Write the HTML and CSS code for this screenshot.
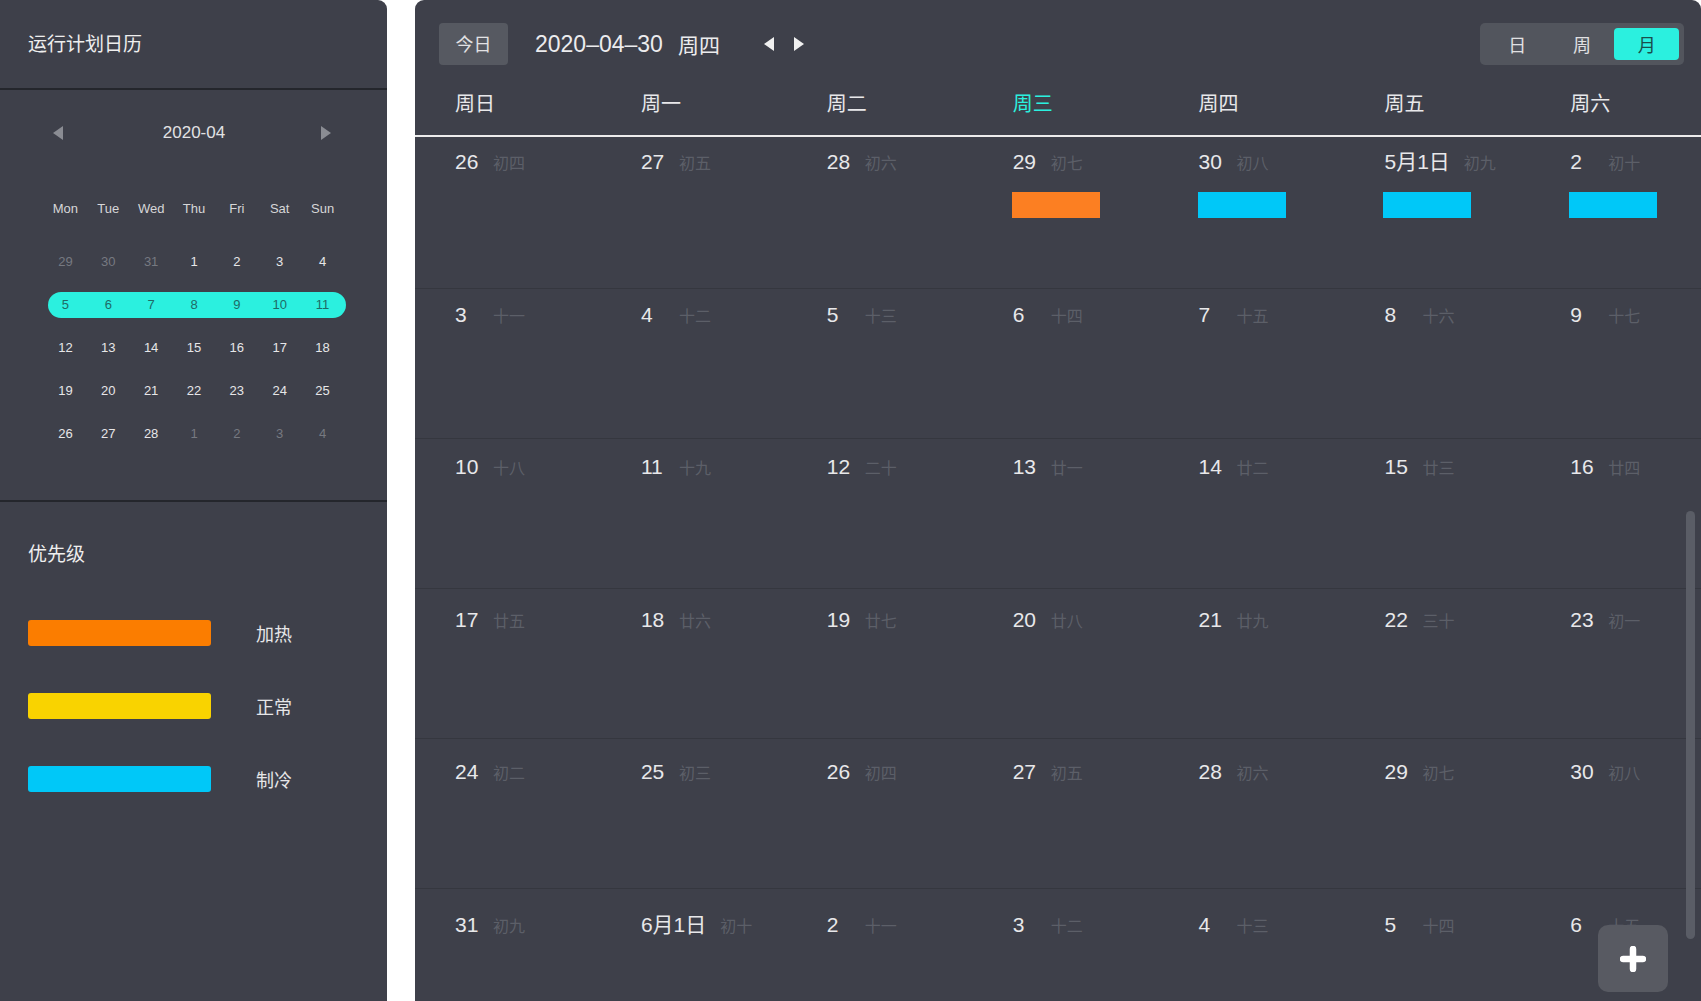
FILE: index.html
```html
<!DOCTYPE html>
<html lang="zh-CN">
<head>
<meta charset="utf-8">
<title>运行计划日历</title>
<link rel="stylesheet" href="styles.css">
</head>
<body>
<aside class="sidebar">
  <div class="side-title">运行计划日历</div>
  <div class="divider"></div>
  <section class="mini">
    <div class="mini-head">
      <svg class="mini-arrow" width="10" height="14" viewBox="0 0 10 14"><path d="M10 0 L0 7 L10 14 Z" fill="#8a8c93"/></svg>
      <span class="mini-month">2020-04</span>
      <svg class="mini-arrow" width="10" height="14" viewBox="0 0 10 14"><path d="M0 0 L10 7 L0 14 Z" fill="#8a8c93"/></svg>
    </div>
    <div class="mini-week">
      <span>Mon</span><span>Tue</span><span>Wed</span><span>Thu</span><span>Fri</span><span>Sat</span><span>Sun</span>
    </div>
    <div class="mini-row"><div class="mini-in">
      <span class="dim">29</span><span class="dim">30</span><span class="dim">31</span><span>1</span><span>2</span><span>3</span><span>4</span>
    </div></div>
    <div class="mini-row"><div class="mini-in sel">
      <span>5</span><span>6</span><span>7</span><span>8</span><span>9</span><span>10</span><span>11</span>
    </div></div>
    <div class="mini-row"><div class="mini-in">
      <span>12</span><span>13</span><span>14</span><span>15</span><span>16</span><span>17</span><span>18</span>
    </div></div>
    <div class="mini-row"><div class="mini-in">
      <span>19</span><span>20</span><span>21</span><span>22</span><span>23</span><span>24</span><span>25</span>
    </div></div>
    <div class="mini-row"><div class="mini-in">
      <span>26</span><span>27</span><span>28</span><span class="dim">1</span><span class="dim">2</span><span class="dim">3</span><span class="dim">4</span>
    </div></div>
  </section>
  <div class="divider"></div>
  <section class="prio">
    <div class="prio-title">优先级</div>
    <div class="legend">
      <div class="lg-row"><span class="lg-bar heat"></span><span class="lg-label">加热</span></div>
      <div class="lg-row"><span class="lg-bar normal"></span><span class="lg-label">正常</span></div>
      <div class="lg-row"><span class="lg-bar cool"></span><span class="lg-label">制冷</span></div>
    </div>
  </section>
</aside>

<main class="main">
  <div class="topbar">
    <div class="today">今日</div>
    <span class="cur-date">2020–04–30</span>
    <span class="cur-week">周四</span>
    <div class="nav">
      <svg width="10" height="14" viewBox="0 0 10 14"><path d="M10 0 L0 7 L10 14 Z" fill="#f0f0f0"/></svg>
      <svg width="10" height="14" viewBox="0 0 10 14"><path d="M0 0 L10 7 L0 14 Z" fill="#f0f0f0"/></svg>
    </div>
    <div class="views">
      <span class="view">日</span>
      <span class="view">周</span>
      <span class="view active">月</span>
    </div>
  </div>

  <div class="weekhead">
    <span>周日</span><span>周一</span><span>周二</span><span class="today-col">周三</span><span>周四</span><span>周五</span><span>周六</span>
  </div>

  <div class="grid">
    <div class="cell"><div class="dn"><span class="num">26</span><span class="lunar">初四</span></div></div>
    <div class="cell"><div class="dn"><span class="num">27</span><span class="lunar">初五</span></div></div>
    <div class="cell"><div class="dn"><span class="num">28</span><span class="lunar">初六</span></div></div>
    <div class="cell"><div class="dn"><span class="num">29</span><span class="lunar">初七</span></div><div class="ev heat-ev"></div></div>
    <div class="cell"><div class="dn"><span class="num">30</span><span class="lunar">初八</span></div><div class="ev cool-ev"></div></div>
    <div class="cell"><div class="dn"><span class="num">5月1日</span><span class="lunar">初九</span></div><div class="ev cool-ev"></div></div>
    <div class="cell"><div class="dn"><span class="num">2</span><span class="lunar">初十</span></div><div class="ev cool-ev"></div></div>

    <div class="cell"><div class="dn"><span class="num">3</span><span class="lunar">十一</span></div></div>
    <div class="cell"><div class="dn"><span class="num">4</span><span class="lunar">十二</span></div></div>
    <div class="cell"><div class="dn"><span class="num">5</span><span class="lunar">十三</span></div></div>
    <div class="cell"><div class="dn"><span class="num">6</span><span class="lunar">十四</span></div></div>
    <div class="cell"><div class="dn"><span class="num">7</span><span class="lunar">十五</span></div></div>
    <div class="cell"><div class="dn"><span class="num">8</span><span class="lunar">十六</span></div></div>
    <div class="cell"><div class="dn"><span class="num">9</span><span class="lunar">十七</span></div></div>

    <div class="cell"><div class="dn"><span class="num">10</span><span class="lunar">十八</span></div></div>
    <div class="cell"><div class="dn"><span class="num">11</span><span class="lunar">十九</span></div></div>
    <div class="cell"><div class="dn"><span class="num">12</span><span class="lunar">二十</span></div></div>
    <div class="cell"><div class="dn"><span class="num">13</span><span class="lunar">廿一</span></div></div>
    <div class="cell"><div class="dn"><span class="num">14</span><span class="lunar">廿二</span></div></div>
    <div class="cell"><div class="dn"><span class="num">15</span><span class="lunar">廿三</span></div></div>
    <div class="cell"><div class="dn"><span class="num">16</span><span class="lunar">廿四</span></div></div>

    <div class="cell"><div class="dn"><span class="num">17</span><span class="lunar">廿五</span></div></div>
    <div class="cell"><div class="dn"><span class="num">18</span><span class="lunar">廿六</span></div></div>
    <div class="cell"><div class="dn"><span class="num">19</span><span class="lunar">廿七</span></div></div>
    <div class="cell"><div class="dn"><span class="num">20</span><span class="lunar">廿八</span></div></div>
    <div class="cell"><div class="dn"><span class="num">21</span><span class="lunar">廿九</span></div></div>
    <div class="cell"><div class="dn"><span class="num">22</span><span class="lunar">三十</span></div></div>
    <div class="cell"><div class="dn"><span class="num">23</span><span class="lunar">初一</span></div></div>

    <div class="cell"><div class="dn"><span class="num">24</span><span class="lunar">初二</span></div></div>
    <div class="cell"><div class="dn"><span class="num">25</span><span class="lunar">初三</span></div></div>
    <div class="cell"><div class="dn"><span class="num">26</span><span class="lunar">初四</span></div></div>
    <div class="cell"><div class="dn"><span class="num">27</span><span class="lunar">初五</span></div></div>
    <div class="cell"><div class="dn"><span class="num">28</span><span class="lunar">初六</span></div></div>
    <div class="cell"><div class="dn"><span class="num">29</span><span class="lunar">初七</span></div></div>
    <div class="cell"><div class="dn"><span class="num">30</span><span class="lunar">初八</span></div></div>

    <div class="cell"><div class="dn"><span class="num">31</span><span class="lunar">初九</span></div></div>
    <div class="cell"><div class="dn"><span class="num">6月1日</span><span class="lunar">初十</span></div></div>
    <div class="cell"><div class="dn"><span class="num">2</span><span class="lunar">十一</span></div></div>
    <div class="cell"><div class="dn"><span class="num">3</span><span class="lunar">十二</span></div></div>
    <div class="cell"><div class="dn"><span class="num">4</span><span class="lunar">十三</span></div></div>
    <div class="cell"><div class="dn"><span class="num">5</span><span class="lunar">十四</span></div></div>
    <div class="cell"><div class="dn"><span class="num">6</span><span class="lunar">十五</span></div></div>
  </div>

  <div class="scroll-thumb"></div>
  <button class="fab" type="button" aria-label="新增">
    <svg width="26" height="26" viewBox="0 0 26 26"><path d="M13 3 V23 M3 13 H23" stroke="#ffffff" stroke-width="6.5" stroke-linecap="round" fill="none"/></svg>
  </button>
</main>
</body>
</html>
```
FILE: styles.css
```css
* { box-sizing: border-box; margin: 0; padding: 0; }

html, body { height: 100%; }

body {
  background: #ffffff;
  font-family: "Liberation Sans", "Noto Sans CJK SC", sans-serif;
  color: #e6e6e8;
  display: flex;
  gap: 28px;
  height: 1001px;
  overflow: hidden;
}

/* ---------- sidebar ---------- */
.sidebar {
  width: 387px;
  flex: none;
  background: #3e404a;
  border-top-right-radius: 9px;
  display: flex;
  flex-direction: column;
}

.side-title {
  height: 88px;
  padding: 0 0 3px 28px;
  display: flex;
  align-items: center;
  font-size: 19px;
  color: #eeeeee;
}

.divider {
  height: 2px;
  background: #24262c;
  flex: none;
}

.mini { padding: 30px 0 45px; }

.mini-head {
  height: 26px;
  display: flex;
  align-items: center;
  justify-content: space-between;
  padding: 0 56px 0 53px;
}

.mini-month {
  font-size: 17px;
  color: #e2e2e4;
  margin-left: 4px;
}

.mini-week {
  margin: 49px 0 19px 44px;
  width: 300px;
  height: 26px;
  display: grid;
  grid-template-columns: repeat(7, 1fr);
  align-items: center;
  justify-items: center;
  font-size: 13px;
  color: #d6d6d8;
}

.mini-row {
  height: 43px;
  padding: 8.5px 0;
}

.mini-in {
  margin-left: 44px;
  width: 300px;
  height: 26px;
  display: grid;
  grid-template-columns: repeat(7, 1fr);
  align-items: center;
  justify-items: center;
  font-size: 13px;
  color: #e6e6e8;
}

.mini-in .dim { color: #767981; }

.mini-in.sel {
  position: relative;
  isolation: isolate;
  color: #1f6b66;
}

.mini-in.sel::before {
  content: "";
  position: absolute;
  left: 4px;
  right: -2px;
  top: 0;
  bottom: 0;
  border-radius: 13px;
  background: #2bf0df;
  z-index: -1;
}

.prio { padding: 40px 0 0 28px; }

.prio-title {
  font-size: 19px;
  line-height: 26px;
  color: #eeeeee;
}

.legend {
  margin-top: 52px;
  display: flex;
  flex-direction: column;
  gap: 47px;
}

.lg-row {
  display: flex;
  align-items: center;
  gap: 45px;
}

.lg-bar {
  width: 183px;
  height: 26px;
  border-radius: 3px;
}

.lg-bar.heat { background: #fb7d00; }
.lg-bar.normal { background: #f9d300; }
.lg-bar.cool { background: #00c8f8; }

.lg-label {
  font-size: 18px;
  color: #e6e6e8;
}

/* ---------- main ---------- */
.main {
  flex: 1;
  position: relative;
  background: #3e404a;
  border-radius: 9px 9px 0 0;
  overflow: hidden;
  display: flex;
  flex-direction: column;
}

.topbar {
  height: 65px;
  padding: 23px 17px 0 24px;
  display: flex;
  align-items: center;
  flex: none;
}

.today {
  width: 69px;
  height: 42px;
  background: #565961;
  border-radius: 4px;
  display: flex;
  align-items: center;
  justify-content: center;
  font-size: 18px;
  color: #e2e2e4;
  padding-bottom: 2px;
}

.cur-date {
  margin-left: 27px;
  font-size: 23px;
  color: #ececee;
}

.cur-week {
  margin-left: 15px;
  font-size: 21px;
  color: #ececee;
}

.nav {
  margin-left: 44px;
  display: flex;
  gap: 20px;
}

.views {
  margin-left: auto;
  width: 204px;
  height: 42px;
  padding: 5px;
  background: #52555d;
  border-radius: 5px;
  display: flex;
}

.view {
  flex: 1;
  display: flex;
  align-items: center;
  justify-content: center;
  font-size: 18px;
  color: #e0e0e2;
  border-radius: 4px;
}

.view.active {
  background: #2bf0df;
  color: #1a4f4c;
}

.weekhead {
  flex: none;
  display: grid;
  grid-template-columns: repeat(6, 185.9px) 1fr;
  padding: 27px 0 19px;
  border-bottom: 2px solid #ececec;
  font-size: 20px;
  line-height: 24px;
  color: #e8e8ea;
}

.weekhead span { padding-left: 40px; }

.weekhead .today-col { color: #2bf0df; }

.grid {
  margin-top: 2px;
  display: grid;
  grid-template-columns: repeat(6, 185.9px) 1fr;
  grid-auto-rows: 152.5px;
  background: repeating-linear-gradient(to bottom, transparent 0 149px, #35373f 149px 150px);
}

.cell {
  padding: 11px 0 0 40px;
}

.dn {
  display: flex;
  align-items: baseline;
}

.num {
  min-width: 24px;
  margin-right: 14px;
  font-size: 21px;
  line-height: 24px;
  color: #e8e8ea;
  white-space: nowrap;
}

.lunar {
  font-size: 16px;
  color: #5c5f68;
  white-space: nowrap;
}

.ev {
  width: 88px;
  height: 26px;
  margin: 18px 0 0 -1px;
}

.heat-ev { background: #fc7f22; }
.cool-ev { background: #00c8f8; }

.scroll-thumb {
  position: absolute;
  right: 6px;
  top: 511px;
  width: 9px;
  height: 428px;
  border-radius: 5px;
  background: #5a5d66;
}

.fab {
  position: absolute;
  right: 33px;
  bottom: 9px;
  width: 70px;
  height: 67px;
  border: none;
  border-radius: 10px;
  background: #585a62;
  display: flex;
  align-items: center;
  justify-content: center;
}
```
